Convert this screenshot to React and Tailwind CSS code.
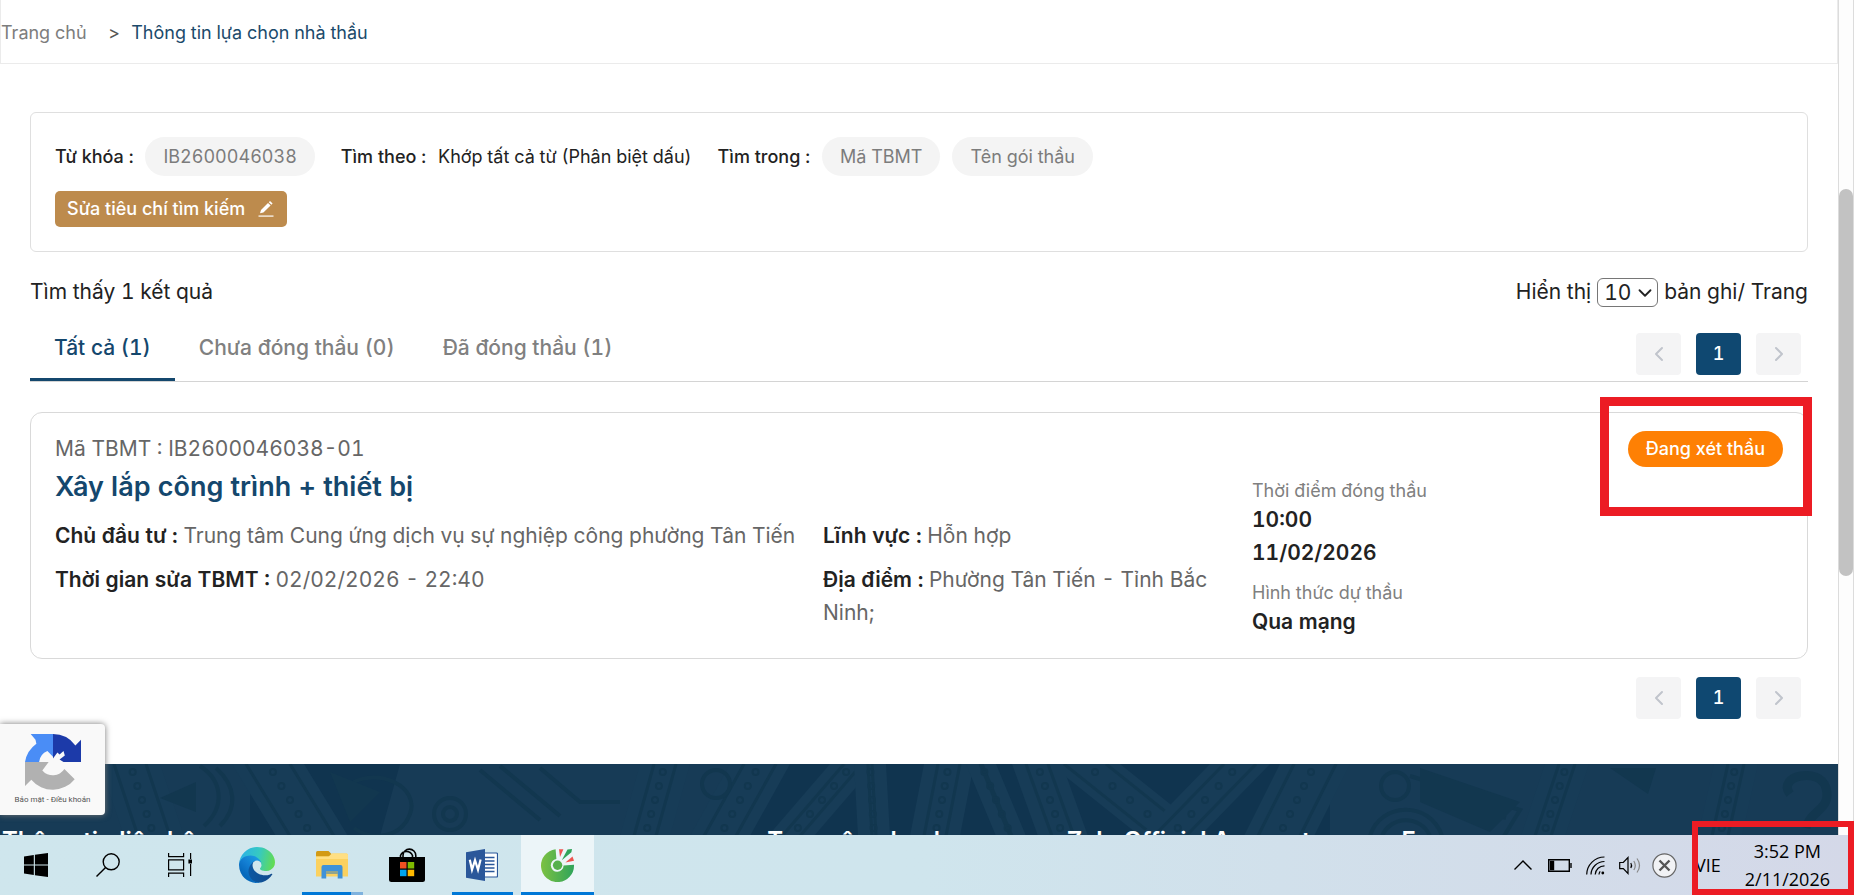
import React, { useState } from 'react';
import { ChevronDown, ChevronLeft, ChevronRight } from 'lucide-react';

const tabs = [
  { id: 'all', label: 'Tất cả', count: 1 },
  { id: 'open', label: 'Chưa đóng thầu', count: 0 },
  { id: 'closed', label: 'Đã đóng thầu', count: 1 },
];

const notice = {
  code: 'IB2600046038-01',
  title: 'Xây lắp công trình + thiết bị',
  status: 'Đang xét thầu',
  investor: 'Trung tâm Cung ứng dịch vụ sự nghiệp công phường Tân Tiến',
  updatedAt: '02/02/2026 - 22:40',
  field: 'Hỗn hợp',
  location: 'Phường Tân Tiến - Tỉnh Bắc Ninh;',
  closeTime: '10:00',
  closeDate: '11/02/2026',
  method: 'Qua mạng',
};

function Chip({ children }) {
  return (
    <span className="flex h-[39px] items-center rounded-full bg-[#f4f4f4] px-[18px] text-[#7c7c7c]">{children}</span>
  );
}

function Pagination() {
  return (
    <nav aria-label="Phân trang" className="flex gap-[15px] pr-[7px]">
      <button aria-label="Trang trước" className="flex h-[42px] w-[45px] items-center justify-center rounded-sm bg-[#f4f4f5] text-[#c0c4cc]">
        <ChevronLeft size={24} />
      </button>
      <button className="flex h-[42px] w-[45px] items-center justify-center rounded-sm bg-[#0f4871] text-lg font-medium text-white">1</button>
      <button aria-label="Trang sau" className="flex h-[42px] w-[45px] items-center justify-center rounded-sm bg-[#f4f4f5] text-[#c0c4cc]">
        <ChevronRight size={24} />
      </button>
    </nav>
  );
}

function Breadcrumb() {
  return (
    <nav aria-label="Breadcrumb" className="flex h-16 items-center border border-t-0 border-[#ebebeb] pt-0.5 text-lg">
      <a href="#" className="text-[#7d7d7d]">Trang chủ</a>
      <span className="ml-[22px] mr-[11px] text-[#555]">&gt;</span>
      <a href="#" className="text-[#1b4a6b]">Thông tin lựa chọn nhà thầu</a>
    </nav>
  );
}

function SearchCriteria() {
  return (
    <section className="mt-12 rounded-md border border-[#dfdfdf] p-6 text-lg">
      <div className="flex flex-wrap items-center">
        <span className="mr-3 font-medium">Từ khóa :</span>
        <Chip>IB2600046038</Chip>
        <span className="ml-[26px] mr-3 font-medium">Tìm theo :</span>
        <span>Khớp tất cả từ (Phân biệt dấu)</span>
        <span className="ml-[26px] mr-3 font-medium">Tìm trong :</span>
        <div className="flex gap-3">
          <Chip>Mã TBMT</Chip>
          <Chip>Tên gói thầu</Chip>
        </div>
      </div>
      <button className="mt-[15px] flex h-9 items-center gap-3 rounded-[5px] bg-[#bd8b4d] px-3 font-medium text-white">
        Sửa tiêu chí tìm kiếm
        <svg width="18" height="18" viewBox="0 0 18 18" fill="currentColor">
          <path d="M3 13.2 4 10 11 3 13.6 5.6 6.4 12.6Z" />
          <path d="M11.8 2.2 13 1l2.6 2.6-1.2 1.2Z" />
          <path d="M1.5 15.4h15v1.4h-15z" opacity=".85" />
        </svg>
      </button>
    </section>
  );
}

function Field({ label, children }) {
  return (
    <p>
      <span className="font-semibold text-[#222]">{label} :</span> {children}
    </p>
  );
}

function NoticeCard() {
  return (
    <article className="relative mt-[30px] grid grid-cols-[1197fr_531fr] rounded-xl border border-[#d9d9d9] px-6 pt-[21px] pb-5 text-[21px] leading-[33px] text-[#666]">
      <div>
        <p className="leading-[30px]">Mã TBMT : {notice.code}</p>
        <h2 className="mt-[5px] text-[27px] leading-9 font-semibold text-[#14476d]">
          <a href="#">{notice.title}</a>
        </h2>
        <div className="mt-3.5 grid grid-cols-[768fr_429fr]">
          <div className="flex flex-col gap-[11px]">
            <Field label="Chủ đầu tư">{notice.investor}</Field>
            <Field label="Thời gian sửa TBMT">{notice.updatedAt}</Field>
          </div>
          <div className="flex flex-col gap-[11px] pr-8">
            <Field label="Lĩnh vực">{notice.field}</Field>
            <Field label="Địa điểm">{notice.location}</Field>
          </div>
        </div>
      </div>
      <div className="pt-[45px] font-semibold text-[#222]">
        <p className="text-lg leading-6 font-normal text-[#808080]">Thời điểm đóng thầu</p>
        <p>{notice.closeTime}</p>
        <p>{notice.closeDate}</p>
        <p className="mt-3 text-lg leading-6 font-normal text-[#808080]">Hình thức dự thầu</p>
        <p>{notice.method}</p>
      </div>
      <div className="absolute top-[18px] right-6">
        <span className="flex h-9 items-center rounded-full bg-[#fe8004] px-[18px] text-lg font-medium text-white">{notice.status}</span>
        <div className="absolute -top-[34px] -right-[29px] -bottom-[49px] -left-7 border-[9px] border-[#ec1c24]" />
      </div>
    </article>
  );
}

// Slanted ornament band of the drum motif: stripes with a row of beads between them
function Band({ x, lean, w = 60 }) {
  const beads = [8, 22, 36, 50, 64];
  return (
    <g>
      <path d={`M${x} 0h${w}l${lean} 72h-${w}z`} fill="#173c57" />
      <path d={`M${x + 14} 0l${lean} 72M${x + w - 14} 0l${lean} 72`} stroke="#12374f" strokeWidth="3" />
      {beads.map((y) => (
        <circle key={y} cx={x + w / 2 + (lean * y) / 72} cy={y} r="3" fill="none" stroke="#12374f" strokeWidth="2" />
      ))}
    </g>
  );
}

function FooterPattern() {
  return (
    <svg className="absolute inset-0 h-[72px] w-full" viewBox="0 0 1838 72" preserveAspectRatio="xMidYMin slice" fill="none">
      <path d="M0 0h250v72H0zM400 0h360l-50 72H380zM1330 0h508v72h-508z" fill="#173b56" />
      <Band x={100} lean={24} />
      <Band x={232} lean={44} w={72} />
      <Band x={640} lean={-20} w={50} />
      <Band x={730} lean={-40} />
      <Band x={830} lean={-62} w={46} />
      <Band x={854} lean={4} w={32} />
      <Band x={924} lean={-14} w={50} />
      <Band x={966} lean={30} w={30} />
      <Band x={1012} lean={26} w={50} />
      <Band x={1050} lean={90} w={70} />
      <Band x={1210} lean={-70} w={60} />
      <Band x={1280} lean={-36} w={70} />
      <Band x={1545} lean={-24} w={44} />
      <Band x={1714} lean={-16} w={44} />
      <g stroke="#12374f" strokeWidth="4">
        <circle cx="30" cy="10" r="22" />
        <circle cx="30" cy="10" r="12" />
        <path d="M200 2c22 14 26 40 4 60M216 4c20 18 22 40 4 58" />
        <circle cx="450" cy="50" r="16" />
        <circle cx="450" cy="50" r="7" />
        <path d="M350 20c30-18 70 4 60 30s-40 26-56 14M480 6l60 50M500 2l60 50M540 4l40 34h40" />
        <circle cx="716" cy="20" r="14" />
        <circle cx="1395" cy="22" r="14" />
        <path d="M1370 72c10-34 60-36 72 0M1382 72c8-20 38-22 48 0" />
        <path d="M1410 12l110 34-16 26M1436 34l70 20" />
        <path d="M1790 30c-14-18 30-28 36-6s-16 22-20 40" strokeWidth="9" />
      </g>
      <path d="M1610 4h46l-8 26zM1420 4l100 34-30 30-70-30zM160 34l36-16v30zM330 8l50 20-30 30z" fill="#12374f" />
    </svg>
  );
}

function Footer() {
  return (
    <footer className="relative mt-[45px] h-60 overflow-hidden bg-[#10344f] text-white">
      <FooterPattern />
      <div className="relative grid grid-cols-[766fr_300fr_335fr_437fr] pt-[61px] pl-0.5 text-2xl leading-8 font-semibold">
        <h3>Thông tin liên hệ</h3>
        <h3>Truy cập nhanh</h3>
        <h3>Zalo Official Account</h3>
        <h3>Fanpage</h3>
      </div>
    </footer>
  );
}

function RecaptchaBadge() {
  return (
    <div className="absolute bottom-5 left-0 flex h-[91px] w-[105px] flex-col items-center rounded-r-[4px] bg-[#f9f9f9] pt-2.5 shadow-[0_0_6px_#777]">
      <svg width="56" height="56" viewBox="0 0 64 64">
        <path d="M64 31.96V6.600l-6.400 6.400A32 32 0 0 0 32 .06V28l5-7 2.500 2.500 4.500-4 1.500 5-6 4.500 4.500 2.960Z" fill="#1c3aa9" />
        <path d="M32 .06H6.500l5.500 6.500 1 4.500A32 32 0 0 0 0 32h16.100a15.600 15.600 0 0 1 9.500-12.500l6.400 6.500Z" fill="#4a8df6" />
        <path d="M0 32v27.400l7.200-7.180A32 32 0 0 0 56.800 51.600L45 40a15.600 15.600 0 0 1-25.200 1.600L27 32Z" fill="#b1b1b1" />
      </svg>
      <p className="mt-0.5 font-[Roboto,sans-serif] text-[8px] leading-4 text-[#555]">
        <a href="#">Bảo mật</a> - <a href="#">Điều khoản</a>
      </p>
    </div>
  );
}

function WindowsIcon() {
  return (
    <svg width="24" height="24" viewBox="0 0 24 24">
      <path d="M0 3.4 9.8 2v9.4H0zM10.9 1.8 24 0v11.4H10.9zM0 12.6h9.8V22L0 20.6zM10.9 12.6H24V24l-13.1-1.8z" />
    </svg>
  );
}

function SearchIcon() {
  return (
    <svg width="24" height="24" viewBox="0 0 24 24" fill="none" stroke="#000" strokeWidth="1.4">
      <circle cx="15.2" cy="8.8" r="8" />
      <path d="M9.6 14.4.5 23.5" />
    </svg>
  );
}

function TaskViewIcon() {
  return (
    <svg width="24" height="24" viewBox="0 0 24 24" fill="none" stroke="#000" strokeWidth="1.2">
      <path d="M.6 0v3.6h15V0M.6 24v-3.8h15V24M.6 6.8h15v10H.6zM22.6 0v6M22.6 11v12" />
      <path d="M21 7h3v3h-3z" fill="#000" />
    </svg>
  );
}

function EdgeIcon() {
  return (
    <svg width="36" height="36" viewBox="0 0 256 256">
      <defs>
        <linearGradient id="edgeA" x1="60" y1="177" x2="241" y2="177" gradientUnits="userSpaceOnUse">
          <stop offset="0" stopColor="#0c59a4" />
          <stop offset="1" stopColor="#114a8b" />
        </linearGradient>
        <linearGradient id="edgeB" x1="152" y1="85" x2="46" y2="200" gradientUnits="userSpaceOnUse">
          <stop offset="0" stopColor="#1b9de2" />
          <stop offset=".6" stopColor="#127cd1" />
          <stop offset="1" stopColor="#0669bc" />
        </linearGradient>
        <linearGradient id="edgeC" x1="20" y1="60" x2="250" y2="110" gradientUnits="userSpaceOnUse">
          <stop offset="0" stopColor="#2cb4e2" />
          <stop offset=".5" stopColor="#36c9c1" />
          <stop offset="1" stopColor="#63dc52" />
        </linearGradient>
      </defs>
      <path d="M231 190.500a93.700 93.700 0 0 1-10.500 4.700 101.900 101.900 0 0 1-35.900 6.500c-47.300 0-88.500-32.500-88.500-74.300a31.500 31.500 0 0 1 16.400-27.300c-42.800 1.800-53.800 46.400-53.800 72.500 0 74 68.100 81.400 82.800 81.400 7.900 0 19.800-2.300 27-4.600l1.300-.4a128.300 128.300 0 0 0 66.600-52.800 4 4 0 0 0-5.400-5.700Z" fill="url(#edgeA)" />
      <path d="M105.700 241.400a79.200 79.200 0 0 1-22.700-21.300 80.700 80.700 0 0 1 29.500-120c3.200-1.500 8.500-4.100 15.600-4a32.400 32.400 0 0 1 25.700 13 31.900 31.900 0 0 1 6.300 18.700c0-.2 24.500-79.600-80-79.600-43.900 0-80 41.700-80 78.200a130.200 130.200 0 0 0 12.100 56 128 128 0 0 0 156.400 67 75.600 75.600 0 0 1-62.800-8Z" fill="url(#edgeB)" />
      <path d="M152.300 148.900c-.9 1-3.400 2.500-3.400 5.600 0 2.600 1.700 5.200 4.800 7.300 14.300 10 41.400 8.600 41.500 8.600a59.600 59.600 0 0 0 30.300-8.300 61.400 61.400 0 0 0 30.400-52.900c.3-22.400-8-37.300-11.300-43.900C223.500 23.900 177.700 0 128 0A128 128 0 0 0 0 126.200c.5-36.500 36.800-66 80-66 3.500 0 23.500.3 42 10.100 16.300 8.500 24.900 18.800 30.800 29.200 6.200 10.700 7.300 24.100 7.300 29.500 0 5.300-2.700 13.300-7.800 19.900Z" fill="url(#edgeC)" />
    </svg>
  );
}

function FolderIcon() {
  return (
    <svg width="32" height="28" viewBox="0 0 32 28">
      <path d="M0 1.500Q0 0 1.500 0h11l3 3-3 3H0z" fill="#d39a14" />
      <path d="M0 5.500h13l3-3h14.500Q32 2.500 32 4v21.500H0z" fill="#fbd15f" />
      <path d="M0 5.500h13l3-3h14.500Q32 2.500 32 4v4H0z" fill="#ffdf83" />
      <path d="M5.500 16q0-2 2-2h17q2 0 2 2v11.500h-4.800V20H10.200v7.500H5.500z" fill="#3f92d8" />
      <path d="M10.200 20h11.500v3H10.200z" fill="#2779be" opacity=".5" />
    </svg>
  );
}

function StoreIcon() {
  return (
    <svg width="36" height="34" viewBox="0 0 36 34">
      <path d="M11.500 10V7.500a6.500 6.500 0 0 1 12 0V10M14 10V7.500a6 6 0 0 1 12.800 0V10" fill="none" stroke="#000" strokeWidth="1.600" />
      <path d="M0 9h36v22.500Q36 34 33.500 34h-31Q0 34 0 31.500z" />
      <path d="M11 14h6.500v6.500H11z" fill="#f25022" />
      <path d="M18.700 14h6.500v6.500h-6.500z" fill="#7fba00" />
      <path d="M11 21.700h6.500v6.500H11z" fill="#00a4ef" />
      <path d="M18.700 21.700h6.500v6.500h-6.500z" fill="#ffb900" />
    </svg>
  );
}

function WordIcon() {
  return (
    <svg width="32" height="32" viewBox="0 0 32 32">
      <path d="M17 4h13.500q1 0 1 1v22q0 1-1 1H17z" fill="#fff" stroke="#2b579a" strokeWidth="1.200" />
      <path d="M19 8.500h9.500M19 12h9.500M19 15.500h9.500M19 19h9.500M19 22.500h9.500" stroke="#2b579a" strokeWidth="1.600" />
      <path d="M0 3.200 19 0v32L0 28.800z" fill="#2b579a" />
      <path d="m3.800 10.800 2.200 10 3-9.600 3 9.600 2.600-10.400" fill="none" stroke="#fff" strokeWidth="2.200" />
    </svg>
  );
}

function CocCocIcon() {
  return (
    <svg width="34" height="34" viewBox="0 0 34 34">
      <defs>
        <linearGradient id="coccoc" x1="0" y1="0" x2="1" y2="0">
          <stop offset="0" stopColor="#7cc142" />
          <stop offset="1" stopColor="#2fa45a" />
        </linearGradient>
      </defs>
      <path d="M14.600 1.200A16.500 16.500 0 1 0 33 16.800L22.600 17.400A6.400 6.400 0 1 1 15.400 11Z" fill="url(#coccoc)" />
      <circle cx="16.600" cy="17.200" r="4.700" fill="#55b04c" />
      <path d="M18 1.200h4.400L19 9z" fill="#ef5350" />
      <path d="m26.500 1.500 4.500-.5-.6 3.200-9.600 8z" fill="#2fa45a" />
      <path d="m31.500 8.500 1.500 4.200-8.600 1.800z" fill="#ef5350" />
    </svg>
  );
}

const apps = [
  { name: 'Start', icon: WindowsIcon, box: 'w-[72px]' },
  { name: 'Search', icon: SearchIcon, box: 'w-[72px]' },
  { name: 'Task View', icon: TaskViewIcon, box: 'w-[72px]' },
  { name: 'Microsoft Edge', icon: EdgeIcon, box: 'w-[82px]' },
  { name: 'File Explorer', icon: FolderIcon, box: 'w-[68px]', bar: 'left-1 w-[49px]', stacked: true },
  { name: 'Microsoft Store', icon: StoreIcon, box: 'w-[82px]' },
  { name: 'Word', icon: WordIcon, box: 'w-[68px]', bar: 'left-1 w-[61px]' },
  { name: 'Cốc Cốc', icon: CocCocIcon, box: 'ml-[5px] w-[73px] bg-white/60', bar: 'left-0 w-full' },
];

function TrayIcons() {
  return (
    <div className="flex items-center">
      <svg width="18" height="10" viewBox="0 0 18 10" fill="none" stroke="#000" strokeWidth="1.400">
        <path d="m.5 9.500 8.500-8.500 8.500 8.500" />
      </svg>
      <svg className="ml-4" width="24" height="13" viewBox="0 0 24 13" fill="none" stroke="#000" strokeWidth="1.400">
        <path d="M.7.700h20.600v11.600H.7zM23 4v5" />
        <path d="M2.500 2.500h3v8h-3z" fill="#000" />
      </svg>
      <svg className="ml-3.5" width="19" height="19" viewBox="0 0 19 19" fill="none" stroke="#000" strokeWidth="1.200">
        <path d="M.7 18.500A17.800 17.800 0 0 1 18.500 1M5 18.500A13.500 13.500 0 0 1 18.500 5.500M9.200 18.500a9.300 9.300 0 0 1 9.300-8.700M13 18.500a5.500 5.500 0 0 1 1.200-3.200" />
        <circle cx="16.800" cy="17" r="1.400" fill="#000" stroke="none" />
      </svg>
      <svg className="ml-3.5" width="23" height="19" viewBox="0 0 23 19" fill="none" stroke="#000" strokeWidth="1.200">
        <path d="M.7 6.500h3.600L9 1.500v16l-4.700-4.800H.7z" />
        <path d="M11.800 7q1.600 2.500 0 5" />
        <path d="M14.800 5q3 4.500 0 9M18 2.500q5 7 0 14" stroke="#888" />
      </svg>
      <svg className="ml-2.5" width="25" height="25" viewBox="0 0 25 25" fill="none">
        <circle cx="12.500" cy="12.500" r="11.600" fill="#f1f2f5" stroke="#666" strokeWidth="1.200" />
        <path d="m7.500 7.500 10 10m0-10-10 10" stroke="#555" strokeWidth="2.400" />
      </svg>
    </div>
  );
}

function Taskbar() {
  return (
    <div className="relative flex h-[60px] shrink-0 justify-between bg-linear-to-r from-[#cfe6ed] via-[#cfe5ed] to-[#d4d8e8] font-['Open_Sans',sans-serif] text-lg text-black">
      <div className="flex">
        {apps.map(({ name, icon: Icon, box, bar, stacked }) => (
          <button key={name} aria-label={name} className={`relative flex items-center justify-center ${box}`}>
            <Icon />
            {bar && <span className={`absolute bottom-0 h-[3px] bg-[#0078d7] ${bar}`} />}
            {stacked && <span className="absolute bottom-0 left-[53px] h-[3px] w-3 bg-[#7fb2de]" />}
          </button>
        ))}
      </div>
      <div className="flex items-center pr-6">
        <TrayIcons />
        <span className="ml-[18px]">VIE</span>
        <div className="ml-6 text-center leading-7">
          <p>3:52 PM</p>
          <p>2/11/2026</p>
        </div>
      </div>
      <div className="absolute right-0 bottom-0 h-[74px] w-[162px] border-[6px] border-[#ec1c24]" />
    </div>
  );
}

export default function App() {
  const [activeTab, setActiveTab] = useState('all');
  const [pageSize, setPageSize] = useState('10');

  return (
    <div className="flex h-screen flex-col overflow-hidden bg-white font-[Inter,sans-serif] text-[#222] tabular-nums">
      <div className="relative flex min-h-0 flex-1">
        <main className="min-w-0 flex-1 overflow-hidden">
          <Breadcrumb />
          <div className="px-[30px]">
            <SearchCriteria />

            <div className="mt-[25px] flex h-[30px] items-center justify-between text-[21px]">
              <p>Tìm thấy 1 kết quả</p>
              <div className="flex items-center">
                <label htmlFor="page-size">Hiển thị</label>
                <span className="relative mx-1.5 flex">
                  <select
                    id="page-size"
                    value={pageSize}
                    onChange={(e) => setPageSize(e.target.value)}
                    className="h-[29px] w-[61px] appearance-none rounded-md border border-[#767676] pl-1.5 leading-none tabular-nums"
                  >
                    <option>10</option>
                    <option>20</option>
                    <option>50</option>
                  </select>
                  <ChevronDown size={22} className="pointer-events-none absolute top-1 right-0.5" />
                </span>
                <span>bản ghi/ Trang</span>
              </div>
            </div>

            <div className="flex h-[75px] items-end justify-between border-b border-[#d4d4d4]">
              <div role="tablist" className="flex text-[21px] leading-[30px] font-medium">
                {tabs.map(({ id, label, count }) => (
                  <button
                    key={id}
                    role="tab"
                    aria-selected={activeTab === id}
                    onClick={() => setActiveTab(id)}
                    className={`border-b-[3px] px-6 pb-[15px] ${activeTab === id ? 'border-[#14476d] text-[#14476d]' : 'border-transparent text-[#808080]'}`}
                  >
                    {label} ({count})
                  </button>
                ))}
              </div>
              <div className="mb-1.5">
                <Pagination />
              </div>
            </div>

            <NoticeCard />
            <div className="mt-[18px] flex justify-end">
              <Pagination />
            </div>
          </div>
          <Footer />
        </main>

        {/* Scrollbar */}
        <div className="flex w-4 shrink-0 flex-col border-x border-[#dcdcdc] bg-[#fdfdfd] pt-[189px]">
          <div className="h-[387px] rounded-full bg-[#c2c2c2]" />
        </div>
        <RecaptchaBadge />
      </div>
      <Taskbar />
    </div>
  );
}
